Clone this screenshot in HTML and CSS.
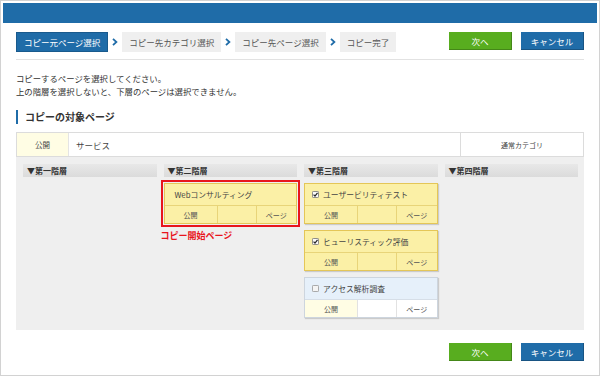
FILE: index.html
```html
<!DOCTYPE html>
<html lang="ja">
<head>
    <meta charset="UTF-8">
    <title>ページコピー</title>
    <meta name="viewport" content="width=device-width, initial-scale=1.0">
    <link rel="stylesheet" href="styles.css">
</head>
<body>
    <div class="window">
        <div class="titlebar"></div>
        <div class="main">
            <div class="topbar">
                <ol class="steps">
                    <li class="step current">コピー元ページ選択</li>
                    <li class="sep"><svg viewBox="0 0 6 8" width="6" height="8"><path d="M1 0.8 L4.4 4 L1 7.2" fill="none" stroke="#1f6ca8" stroke-width="1.8"/></svg></li>
                    <li class="step">コピー先カテゴリ選択</li>
                    <li class="sep"><svg viewBox="0 0 6 8" width="6" height="8"><path d="M1 0.8 L4.4 4 L1 7.2" fill="none" stroke="#1f6ca8" stroke-width="1.8"/></svg></li>
                    <li class="step">コピー先ページ選択</li>
                    <li class="sep"><svg viewBox="0 0 6 8" width="6" height="8"><path d="M1 0.8 L4.4 4 L1 7.2" fill="none" stroke="#1f6ca8" stroke-width="1.8"/></svg></li>
                    <li class="step">コピー完了</li>
                </ol>
                <div class="actions">
                    <button class="btn next">次へ</button>
                    <button class="btn cancel">キャンセル</button>
                </div>
            </div>
            <hr class="rule">
            <p class="intro">コピーするページを選択してください。<br>上の階層を選択しないと、下層のページは選択できません。</p>
            <h2 class="section-title">コピーの対象ページ</h2>
            <div class="target">
                <div class="target-status">公開</div>
                <div class="target-name">サービス</div>
                <div class="target-type">通常カテゴリ</div>
            </div>
            <div class="levels">
                <div class="level">
                    <div class="level-head">▼第一階層</div>
                </div>
                <div class="level">
                    <div class="level-head">▼第二階層</div>
                    <div class="card start">
                        <div class="card-title plain">Webコンサルティング</div>
                        <div class="card-meta"><span>公開</span><span></span><span>ページ</span></div>
                    </div>
                    <div class="start-label">コピー開始ページ</div>
                </div>
                <div class="level">
                    <div class="level-head">▼第三階層</div>
                    <div class="card">
                        <div class="card-title"><svg class="cb" viewBox="0 0 8 8" width="7" height="7"><rect x="0.5" y="0.5" width="7" height="7" rx="1" fill="#fafafa" stroke="#777"/><path d="M1.8 4.1 L3.4 5.8 L6.3 2.2" fill="none" stroke="#222" stroke-width="1.4"/></svg>ユーザービリティテスト</div>
                        <div class="card-meta"><span>公開</span><span></span><span>ページ</span></div>
                    </div>
                    <div class="card">
                        <div class="card-title"><svg class="cb" viewBox="0 0 8 8" width="7" height="7"><rect x="0.5" y="0.5" width="7" height="7" rx="1" fill="#fafafa" stroke="#777"/><path d="M1.8 4.1 L3.4 5.8 L6.3 2.2" fill="none" stroke="#222" stroke-width="1.4"/></svg>ヒューリスティック評価</div>
                        <div class="card-meta"><span>公開</span><span></span><span>ページ</span></div>
                    </div>
                    <div class="card off">
                        <div class="card-title"><svg class="cb" viewBox="0 0 8 8" width="7" height="7"><rect x="0.5" y="0.5" width="7" height="7" rx="1" fill="#f4f4f4" stroke="#999"/></svg>アクセス解析調査</div>
                        <div class="card-meta"><span>公開</span><span></span><span>ページ</span></div>
                    </div>
                </div>
                <div class="level">
                    <div class="level-head">▼第四階層</div>
                </div>
            </div>
            <div class="actions bottom">
                <button class="btn next">次へ</button>
                <button class="btn cancel">キャンセル</button>
            </div>
        </div>
    </div>
</body>
</html>
```

FILE: styles.css
```css
body {
    margin: 0;
    background: #fff;
    font-family: "Noto Sans CJK JP", "Noto Sans", sans-serif;
    color: #333;
}
.window {
    width: 600px;
    height: 376px;
    box-sizing: border-box;
    border: 1px solid #d2d2d2;
    background: #fff;
}
.titlebar {
    height: 20px;
    margin: 2px 2px 0 2px;
    background: #1f6ca8;
}
.main {
    padding: 0 15px;
}
.topbar {
    display: flex;
    justify-content: space-between;
    align-items: flex-start;
    margin-top: 9px;
}
.steps {
    display: flex;
    list-style: none;
    margin: 0;
    padding: 0;
}
.step {
    height: 20px;
    line-height: 20px;
    padding: 0 7px;
    font-size: 8.5px;
    color: #555;
    background: #efefef;
    box-sizing: border-box;
}
.step.current {
    background: #1f6ca8;
    color: #fff;
    border: 1px solid #195a8d;
    line-height: 18px;
}
.sep {
    width: 14px;
    display: flex;
    align-items: center;
    justify-content: center;
}
.actions {
    display: flex;
    gap: 9px;
}
.actions.bottom {
    justify-content: flex-end;
    margin-top: 13px;
}
.btn {
    width: 63px;
    height: 18px;
    padding: 0;
    border: none;
    border-right: 1px solid rgba(0, 0, 0, 0.22);
    border-bottom: 1px solid rgba(0, 0, 0, 0.22);
    color: #fff;
    font-family: inherit;
    font-size: 8.5px;
    cursor: pointer;
}
.btn.next {
    background: #58ad1f;
}
.btn.cancel {
    background: #1f6ca8;
}
.rule {
    border: none;
    border-top: 1px solid #e2e2e2;
    margin: 7px 0 0 0;
}
.intro {
    margin: 12px 0 0 0;
    font-size: 8.4px;
    line-height: 13px;
    color: #333;
}
.section-title {
    margin: 12px 0 0 0;
    height: 14px;
    line-height: 14px;
    padding-left: 7px;
    border-left: 2px solid #1f6ca8;
    font-size: 10px;
    font-weight: bold;
    color: #333;
}
.target {
    display: flex;
    margin-top: 8px;
    height: 25px;
    box-sizing: border-box;
    border: 1px solid #dcdcdc;
    font-size: 8.5px;
}
.target-status {
    width: 51px;
    background: #fffde4;
    border-right: 1px solid #e4e4e4;
    display: flex;
    align-items: center;
    justify-content: center;
    font-size: 7.5px;
    color: #444;
}
.target-name {
    flex: 1;
    display: flex;
    align-items: center;
    padding-left: 7px;
    color: #444;
}
.target-type {
    width: 122px;
    border-left: 1px solid #dcdcdc;
    display: flex;
    align-items: center;
    justify-content: center;
    font-size: 7px;
    color: #444;
}
.levels {
    display: grid;
    grid-template-columns: repeat(4, 1fr);
    gap: 7px;
    padding: 7px 6px 12px 7px;
    background: #efefef;
    height: 173px;
    box-sizing: border-box;
}
.level-head {
    height: 13px;
    line-height: 13px;
    padding-left: 4px;
    background: linear-gradient(#e8e8e8, #dbdbdb);
    font-size: 8px;
    font-weight: bold;
    color: #333;
    margin-bottom: 6px;
}
.card {
    background: #fbf0a6;
    border: 1px solid #e4c657;
    box-shadow: 1px 1px 1px rgba(0, 0, 0, 0.15);
    margin-bottom: 6px;
}
.card.start {
    outline: 2px solid #e8161d;
    outline-offset: 1px;
    box-shadow: none;
}
.card-title {
    height: 21px;
    display: flex;
    align-items: center;
    gap: 4px;
    padding-left: 7px;
    font-size: 7.8px;
    color: #444;
    border-bottom: 1px solid #e8d479;
}
.card-title.plain {
    padding-left: 10px;
}
.card-meta {
    display: grid;
    grid-template-columns: 52px 39px 1fr;
    height: 17px;
    font-size: 7px;
    color: #555;
}
.card-meta span {
    display: flex;
    align-items: center;
    justify-content: center;
}
.card-meta span + span {
    border-left: 1px solid #e8d479;
}
.card.off {
    background: #fff;
    border-color: #cdd5de;
}
.card.off .card-title {
    background: #e6f0fa;
    border-bottom-color: #d6dee7;
}
.card.off .card-meta span + span {
    border-left-color: #e2e2e2;
}
.card.off .card-meta span:first-child {
    background: #fffde4;
}
.start-label {
    margin: 6px 0 0 -3px;
    font-size: 9px;
    line-height: 12px;
    font-weight: bold;
    color: #e8161d;
}
```
